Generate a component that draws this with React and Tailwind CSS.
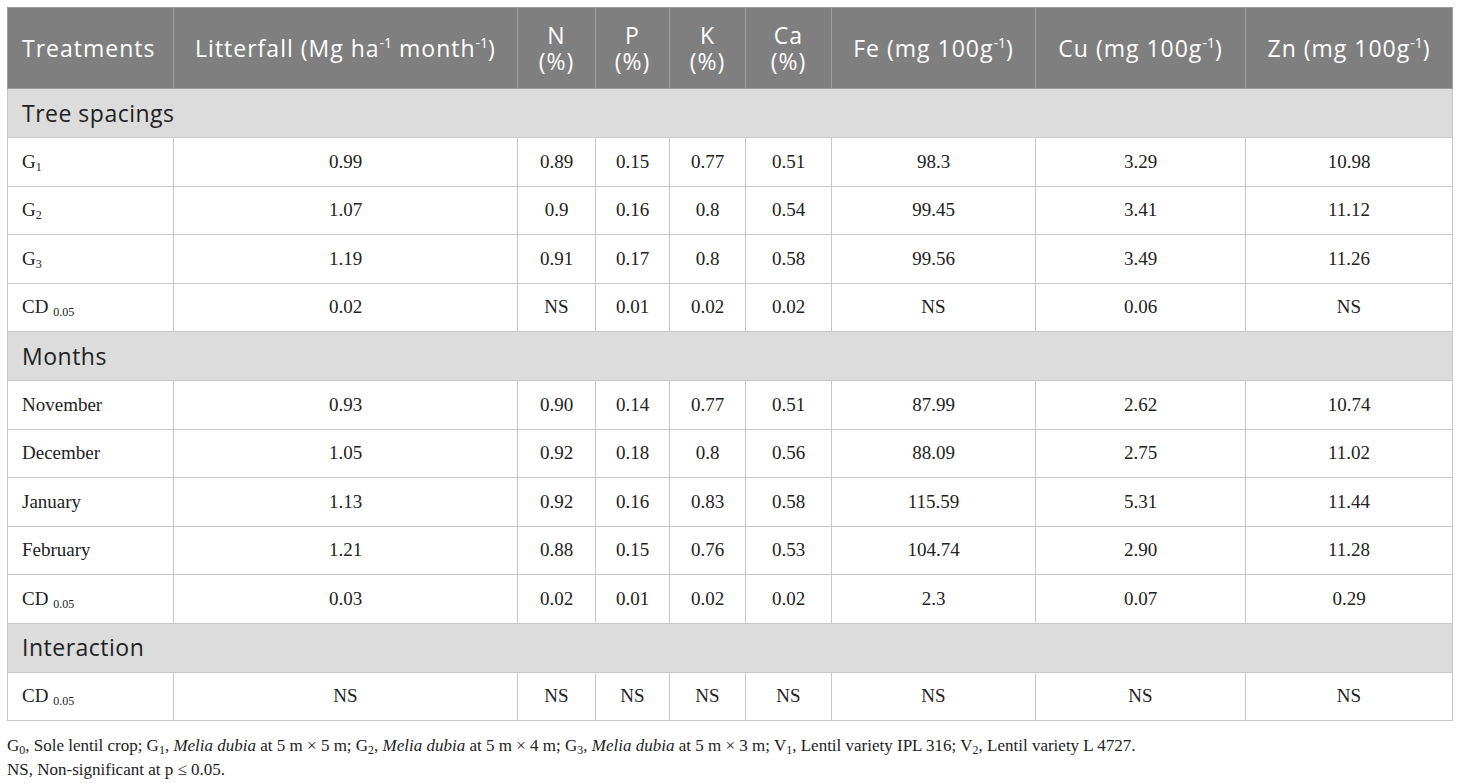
const sans = { fontFamily: '"Open Sans", "Noto Sans", sans-serif' };
const serif = { fontFamily: '"Liberation Serif", "Times New Roman", serif' };

const widths = [166, 344, 78, 74, 76, 86, 204, 210, 207];

const Sup = ({ children }) => <sup className="text-[14px] relative -top-[9px] tracking-normal">{children}</sup>;
const Sub = ({ children }) => <sub className="text-[12px]">{children}</sub>;

const headers = [
  <>Treatments</>,
  <>Litterfall (Mg ha<Sup>-1</Sup> month<Sup>-1</Sup>)</>,
  <>N<br />(%)</>,
  <>P<br />(%)</>,
  <>K<br />(%)</>,
  <>Ca<br />(%)</>,
  <>Fe (mg 100g<Sup>-1</Sup>)</>,
  <>Cu (mg 100g<Sup>-1</Sup>)</>,
  <>Zn (mg 100g<Sup>-1</Sup>)</>,
];

const CD = <>CD <Sub>0.05</Sub></>;

const sections = [
  {
    title: 'Tree spacings',
    rows: [
      [<>G<Sub>1</Sub></>, '0.99', '0.89', '0.15', '0.77', '0.51', '98.3', '3.29', '10.98'],
      [<>G<Sub>2</Sub></>, '1.07', '0.9', '0.16', '0.8', '0.54', '99.45', '3.41', '11.12'],
      [<>G<Sub>3</Sub></>, '1.19', '0.91', '0.17', '0.8', '0.58', '99.56', '3.49', '11.26'],
      [CD, '0.02', 'NS', '0.01', '0.02', '0.02', 'NS', '0.06', 'NS'],
    ],
  },
  {
    title: 'Months',
    rows: [
      ['November', '0.93', '0.90', '0.14', '0.77', '0.51', '87.99', '2.62', '10.74'],
      ['December', '1.05', '0.92', '0.18', '0.8', '0.56', '88.09', '2.75', '11.02'],
      ['January', '1.13', '0.92', '0.16', '0.83', '0.58', '115.59', '5.31', '11.44'],
      ['February', '1.21', '0.88', '0.15', '0.76', '0.53', '104.74', '2.90', '11.28'],
      [CD, '0.03', '0.02', '0.01', '0.02', '0.02', '2.3', '0.07', '0.29'],
    ],
  },
  {
    title: 'Interaction',
    rows: [[CD, 'NS', 'NS', 'NS', 'NS', 'NS', 'NS', 'NS', 'NS']],
  },
];

export default function App() {
  return (
    <div className="w-[1460px] h-[783px] bg-white pt-[7px] px-[7px] overflow-hidden">
      <table className="border-collapse table-fixed w-[1445px]">
        <colgroup>
          {widths.map((w, i) => <col key={i} style={{ width: w }} />)}
        </colgroup>
        <thead>
          <tr className="h-[81px] bg-[#7f7f7f]">
            {headers.map((h, i) => (
              <th
                key={i}
                style={sans}
                className={`text-white font-normal text-[23px] tracking-[1px] leading-[26px] px-[14px] border border-[#9c9c9c] ${i === 0 ? 'text-left' : 'text-center'}`}
              >
                {h}
              </th>
            ))}
          </tr>
        </thead>
        <tbody>
          {sections.map((s) => (
            <>
              <tr key={s.title} className="h-[49px] bg-[#dcdcdc]">
                <td colSpan={9} style={sans} className="text-[23px] tracking-[0.5px] text-[#222] px-[14px] border border-[#c8c8c8]">
                  {s.title}
                </td>
              </tr>
              {s.rows.map((r, ri) => (
                <tr key={s.title + ri} className="h-[48.5px]">
                  {r.map((c, ci) => (
                    <td
                      key={ci}
                      style={serif}
                      className={`text-[19px] text-[#222] border border-[#c8c8c8] ${ci === 0 ? 'text-left px-[14px]' : 'text-center'}`}
                    >
                      {c}
                    </td>
                  ))}
                </tr>
              ))}
            </>
          ))}
        </tbody>
      </table>
      <div style={serif} className="text-[17px] leading-[24px] text-[#222] mt-[13px]">
        <p>
          G<Sub>0</Sub>, Sole lentil crop; G<Sub>1</Sub>, <i>Melia dubia</i> at 5 m × 5 m; G<Sub>2</Sub>, <i>Melia dubia</i> at 5 m × 4 m; G<Sub>3</Sub>, <i>Melia dubia</i> at 5 m × 3 m; V<Sub>1</Sub>, Lentil variety IPL 316; V<Sub>2</Sub>, Lentil variety L 4727.
        </p>
        <p>NS, Non-significant at p ≤ 0.05.</p>
      </div>
    </div>
  );
}
